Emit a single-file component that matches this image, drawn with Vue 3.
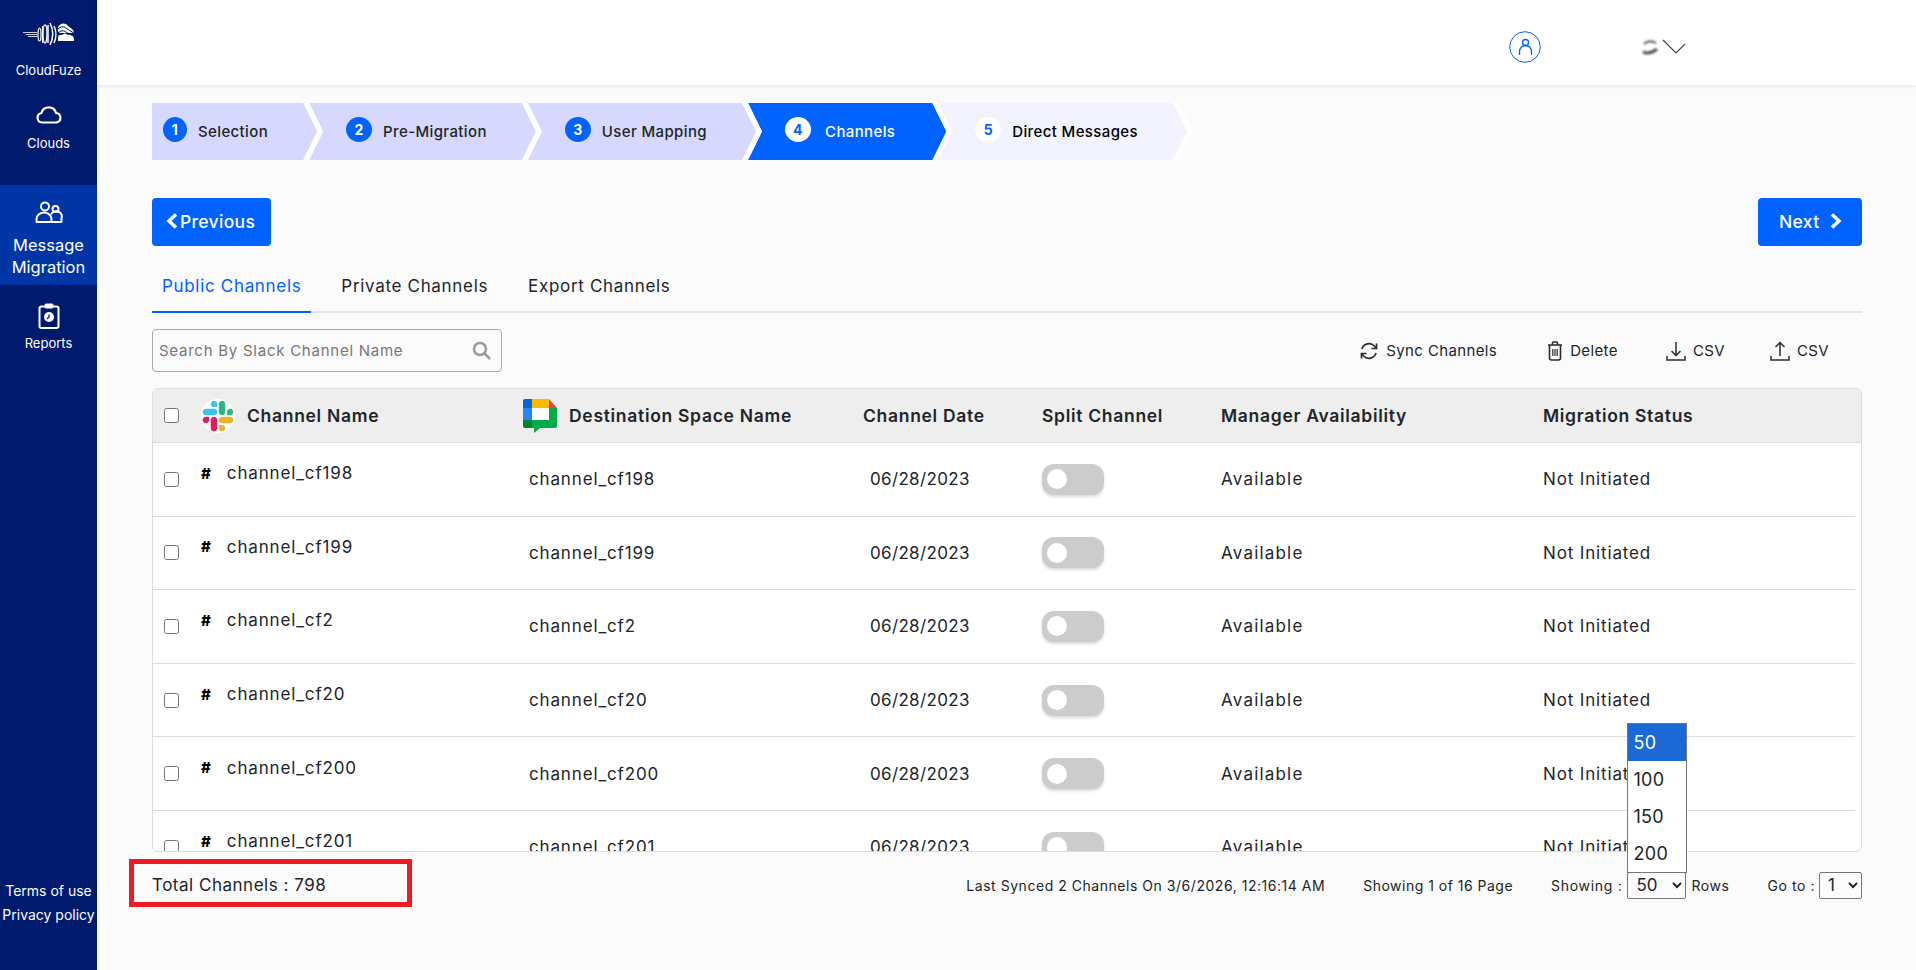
<template>
  <div class="page">
    <!-- Sidebar -->
    <aside class="sidebar">
      <div class="logo">
        <svg width="52" height="24" viewBox="0 0 52 24" fill="none" stroke="#fff">
          <path d="M0 10.500h14M3 12.500h11M5 14.500h9" stroke-width="0.8" />
          <ellipse cx="16.500" cy="12.500" rx="1.500" ry="6.500" stroke-width="1.200" />
          <ellipse cx="22" cy="12" rx="2" ry="9" stroke-width="1.300" />
          <path d="M19.500 4v17" stroke-width="1.200" />
          <path d="M27 1c3.500 7 3.500 15 0 22M25 3v18M31 4c2.500 5 2.500 12 0 17" stroke-width="1.500" />
          <path d="M35 5q3-5 8-3 3 3 6 5 2 2 2 4H35z" fill="#fff" stroke="none" />
          <path d="M35 16q0-4 4-3 3-3 6 0 6-1 6 5v1H35z" fill="#fff" stroke="none" />
          <path d="M35 7q4-4 8-1t8 5M35 11q4-4 8-1t8 4" stroke="#001a6e" stroke-width="1" />
        </svg>
        <span>CloudFuze</span>
      </div>
      <div class="nav-item">
        <svg width="28" height="20" viewBox="0 0 28 20" fill="none" stroke="#fff" stroke-width="2.200">
          <path d="M7 18.500a4.800 4.800 0 0 1-.5-9.500 7.500 7.500 0 0 1 14.500 0 4.800 4.800 0 0 1 .5 9.500z" stroke-linejoin="round" />
        </svg>
        <span>Clouds</span>
      </div>
      <div class="nav-item active">
        <svg width="28" height="22" viewBox="0 0 28 22" fill="none" stroke="#fff" stroke-width="2">
          <circle cx="10" cy="5.500" r="4" />
          <circle cx="20.500" cy="8" r="3" />
          <path d="M1.500 21v-3a7 6 0 0 1 15 0v3z" stroke-linejoin="round" />
          <path d="M16 13.500a5.500 5 0 0 1 10.500 3.500v4h-10" stroke-linejoin="round" />
        </svg>
        <span class="nav-big">Message Migration</span>
      </div>
      <div class="nav-item nav-item--reports">
        <svg width="22" height="26" viewBox="0 0 22 26" fill="none" stroke="#fff" stroke-width="2">
          <rect x="1.500" y="3.500" width="19" height="21.500" rx="2" />
          <rect x="7" y="1" width="8" height="4" rx="1" fill="#fff" stroke-width="1" />
          <circle cx="11" cy="14" r="5" fill="#fff" stroke="none" />
          <path d="M11 11.500V14l-2 2" stroke="#001a6e" stroke-width="1.300" />
        </svg>
        <span>Reports</span>
      </div>
      <div class="side-links">
        <span>Terms of use</span>
        <span>Privacy policy</span>
      </div>
    </aside>

    <div class="main">
      <!-- Top bar -->
      <header class="topbar">
        <svg class="user-icon" width="32" height="32" viewBox="0 0 32 32" fill="none" stroke="#0062ff">
          <circle cx="16" cy="16" r="15.300" stroke-width="1" />
          <circle cx="16.500" cy="11.500" r="3" stroke-width="1.300" />
          <path d="M10.500 24v-3.500a6 6 0 0 1 12 0V24" stroke-width="1.300" />
        </svg>
        <svg class="user-blur" width="19" height="17" viewBox="0 0 19 17" fill="none" stroke="#555">
          <path d="M15 4Q8 0 3 5" stroke-width="2" />
          <path d="M2 13q7 3 14-3" stroke-width="3" />
        </svg>
        <svg class="user-chevron" width="24" height="16" viewBox="0 0 24 16" fill="none" stroke="#444" stroke-width="1.200">
          <path d="M1 1l13 13 9-9" />
        </svg>
      </header>

      <div class="content">
        <!-- Stepper -->
        <div class="stepper">
          <div
            v-for="(step, i) in steps"
            :key="step"
            class="step"
            :class="{ first: i === 0, current: i === 3, todo: i === 4 }"
          >
            <div class="step__body">
              <span class="step__num">{{ i + 1 }}</span>
              <span class="step__label">{{ step }}</span>
            </div>
          </div>
        </div>

        <div class="nav-buttons">
          <div class="btn">
            <svg width="12" height="16" viewBox="0 0 12 16" fill="none" stroke="#fff" stroke-width="3.400">
              <path d="M10 1.500L3 8l7 6.500" />
            </svg>
            <span>Previous</span>
          </div>
          <div class="btn btn--next">
            <span>Next</span>
            <svg width="12" height="16" viewBox="0 0 12 16" fill="none" stroke="#fff" stroke-width="3.400">
              <path d="M2 1.500L9 8l-7 6.500" />
            </svg>
          </div>
        </div>

        <!-- Tabs -->
        <div class="tabs">
          <div class="tab tab--active">Public Channels</div>
          <div class="tab">Private Channels</div>
          <div class="tab">Export Channels</div>
        </div>

        <!-- Toolbar -->
        <div class="toolbar">
          <div class="search">
            <input type="text" placeholder="Search By Slack Channel Name" />
            <svg width="19" height="19" viewBox="0 0 19 19" fill="none" stroke="#9b9b9b" stroke-width="2.500">
              <circle cx="8" cy="8" r="6" />
              <path d="M12.500 12.500L18 18" />
            </svg>
          </div>
          <div class="actions">
            <div class="action action--sync">
              <svg width="20" height="20" viewBox="0 0 24 24" fill="none" stroke="#2b2b2b" stroke-width="2">
                <path d="M21 3v6h-6M3 21v-6h6" />
                <path d="M3.500 9.500a9 9 0 0 1 15-3.500L21 9M3 15l2.500 3a9 9 0 0 0 15-3.500" />
              </svg>
              <span>Sync Channels</span>
            </div>
            <div class="action action--delete">
              <svg width="16" height="20" viewBox="0 0 16 20" fill="none" stroke="#2b2b2b" stroke-width="1.600">
                <path d="M1 4h14M5.500 4V2q0-1 1-1h3q1 0 1 1v2" />
                <path d="M2.500 4v13q0 2 2 2h7q2 0 2-2V4" />
                <path d="M5.800 8v7M8 8v7M10.200 8v7" stroke-width="1.200" />
              </svg>
              <span>Delete</span>
            </div>
            <div class="action action--csv">
              <svg width="20" height="20" viewBox="0 0 20 20" fill="none" stroke="#2b2b2b" stroke-width="1.500">
                <path d="M10 1v13M5.500 10l4.500 4.500 4.500-4.500" />
                <path d="M1 15v4h18v-4" />
              </svg>
              <span>CSV</span>
            </div>
            <div class="action">
              <svg width="20" height="20" viewBox="0 0 20 20" fill="none" stroke="#2b2b2b" stroke-width="1.500">
                <path d="M10 15V1.500M5.500 6L10 1.500 14.500 6" />
                <path d="M1 15v4h18v-4" />
              </svg>
              <span>CSV</span>
            </div>
          </div>
        </div>

        <!-- Table -->
        <div class="table">
          <div class="tr tr--head">
            <div class="cell-check"><input type="checkbox" /></div>
            <div class="th">
              <svg width="34" height="34" viewBox="-6 -6 136 136">
                <circle cx="62" cy="62" r="68" fill="#fff" />
                <path d="M26.400 78.200c0 7.100-5.800 12.900-12.900 12.900S.6 85.300.6 78.200c0-7.100 5.800-12.900 12.900-12.900h12.900v12.900zm6.500 0c0-7.100 5.800-12.900 12.900-12.900s12.900 5.800 12.900 12.900v32.300c0 7.100-5.800 12.900-12.900 12.900s-12.900-5.800-12.900-12.900V78.200z" fill="#E01E5A" />
                <path d="M45.800 26.400c-7.100 0-12.900-5.800-12.900-12.900S38.700.6 45.800.6s12.900 5.800 12.900 12.900v12.900H45.800zm0 6.500c7.100 0 12.900 5.800 12.900 12.900s-5.800 12.900-12.900 12.900H13.500C6.400 58.700.6 52.900.6 45.800s5.800-12.900 12.900-12.900h32.300z" fill="#36C5F0" />
                <path d="M97.600 45.800c0-7.100 5.800-12.900 12.900-12.900s12.900 5.800 12.900 12.900-5.800 12.900-12.900 12.900H97.600V45.800zm-6.500 0c0 7.100-5.800 12.900-12.900 12.900s-12.900-5.800-12.900-12.900V13.500C65.300 6.400 71.100.6 78.200.6s12.900 5.800 12.900 12.900v32.300z" fill="#2EB67D" />
                <path d="M78.200 97.600c7.100 0 12.900 5.800 12.900 12.900s-5.800 12.900-12.900 12.900-12.900-5.800-12.900-12.900V97.600h12.900zm0-6.500c-7.100 0-12.900-5.800-12.900-12.900s5.800-12.900 12.900-12.900h32.300c7.100 0 12.900 5.800 12.900 12.900s-5.800 12.900-12.900 12.900H78.200z" fill="#ECB22E" />
              </svg>
              <span>Channel Name</span>
            </div>
            <div class="th">
              <svg width="34" height="34" viewBox="0 0 34 34">
                <rect x="9" y="9" width="17" height="12" fill="#fff" />
                <path d="M2 0h7v9H0V2q0-2 2-2z" fill="#0066da" />
                <rect x="9" y="0" width="17" height="9" fill="#ffba00" />
                <path d="M26 0l8 9h-8z" fill="#ea4335" />
                <rect y="9" width="9" height="12" fill="#2684fc" />
                <path d="M0 21h9v8H2q-2 0-2-2z" fill="#00832d" />
                <path d="M26 9h8v18q0 2-2 2H17l-6 5v-5H9v-8h17z" fill="#00ac47" />
              </svg>
              <span>Destination Space Name</span>
            </div>
            <div class="th">Channel Date</div>
            <div class="th">Split Channel</div>
            <div class="th">Manager Availability</div>
            <div class="th">Migration Status</div>
          </div>

          <div v-for="name in channels" :key="name" class="tr">
            <div class="cell-check"><input type="checkbox" /></div>
            <div class="td td--name">
              <span class="hash">#</span>
              <span>{{ name }}</span>
            </div>
            <div class="td td--dest">{{ name }}</div>
            <div class="td td--date">06/28/2023</div>
            <div class="td">
              <div class="toggle"><span class="toggle__knob"></span></div>
            </div>
            <div class="td td--avail">Available</div>
            <div class="td">Not Initiated</div>
          </div>
        </div>

        <!-- Footer -->
        <div class="footer">
          <div class="total">
            <span>Total Channels : 798</span>
            <div class="total__mark"></div>
          </div>
          <div class="footer__right">
            <span class="synced">Last Synced 2 Channels On 3/6/2026, 12:16:14 AM</span>
            <span class="pages">Showing 1 of 16 Page</span>
            <span class="showing">Showing :</span>
            <div class="rows-select">
              <select class="select select--rows">
                <option v-for="n in rowOptions" :key="n">{{ n }}</option>
              </select>
              <div class="rows-menu">
                <div
                  v-for="(n, i) in rowOptions"
                  :key="n"
                  class="rows-menu__item"
                  :class="{ selected: i === 0 }"
                >
                  {{ n }}
                </div>
              </div>
            </div>
            <span class="rows-label">Rows</span>
            <span class="goto">Go to :</span>
            <select class="select select--goto">
              <option>1</option>
            </select>
          </div>
        </div>
      </div>
    </div>
  </div>
</template>

<script setup>
const steps = ['Selection', 'Pre-Migration', 'User Mapping', 'Channels', 'Direct Messages'];

const channels = [
  'channel_cf198',
  'channel_cf199',
  'channel_cf2',
  'channel_cf20',
  'channel_cf200',
  'channel_cf201',
];

const rowOptions = [50, 100, 150, 200];
</script>

<style>
html,
body {
  margin: 0;
  background: #fbfbfc;
}
</style>

<style scoped>
.page {
  display: flex;
  height: 970px;
  overflow: hidden;
  font-family: Inter, 'Liberation Sans', sans-serif;
  letter-spacing: 0.02em;
  color: #212529;
  background: #fbfbfc;
}

/* Sidebar */
.sidebar {
  display: flex;
  flex-direction: column;
  flex: none;
  width: 97px;
  background: #001a6e;
  color: #fff;
  font-size: 13px;
  letter-spacing: 0;
  text-align: center;
}

.logo {
  display: flex;
  flex-direction: column;
  align-items: center;
  gap: 16px;
  height: 85px;
  padding-top: 22px;
  box-sizing: border-box;
}

.nav-item {
  display: flex;
  flex-direction: column;
  align-items: center;
  gap: 11px;
  height: 100px;
  padding-top: 19px;
  box-sizing: border-box;
}

.nav-item.active {
  gap: 11px;
  padding-top: 16px;
  background: #0035a5;
}

.nav-item--reports {
  gap: 6px;
  padding-top: 18px;
}

.nav-big {
  font-size: 16.5px;
  line-height: 22px;
}

.side-links {
  display: flex;
  flex-direction: column;
  gap: 7px;
  margin-top: auto;
  padding-bottom: 47px;
  font-size: 14px;
  white-space: nowrap;
}

.side-links span {
  line-height: 17px;
}

/* Top bar */
.main {
  flex: 1;
  min-width: 0;
}

.topbar {
  display: flex;
  align-items: center;
  height: 85px;
  padding: 6px 0 0 1412px;
  box-sizing: border-box;
  background: #fff;
  box-shadow: 0 1px 4px #0000001a;
}

.user-icon {
  margin-top: 3px;
}

.user-blur {
  margin: 3px 2px 0 100px;
  filter: blur(1px);
}

.user-chevron {
  margin-top: 2px;
}

.content {
  padding: 18px 54px 0 55px;
}

/* Stepper */
.stepper {
  display: flex;
  height: 57px;
}

.step {
  margin-left: -14px;
  padding-right: 6px;
  background: #fff;
  clip-path: polygon(0 0, calc(100% - 14px) 0, 100% 50%, calc(100% - 14px) 100%, 0 100%, 14px 50%);
}

.step__body {
  display: flex;
  align-items: center;
  height: 100%;
  padding: 0 49px 0 37px;
  background: #d6d9fd;
  clip-path: polygon(0 0, calc(100% - 14px) 0, 100% 50%, calc(100% - 14px) 100%, 0 100%, 14px 50%);
}

.step.first {
  margin-left: 0;
  clip-path: polygon(0 0, calc(100% - 14px) 0, 100% 50%, calc(100% - 14px) 100%, 0 100%);
}

.step.first .step__body {
  padding-left: 11px;
  clip-path: polygon(0 0, calc(100% - 14px) 0, 100% 50%, calc(100% - 14px) 100%, 0 100%);
}

.step.first .step__num {
  width: 24px;
}

.step__num {
  display: flex;
  align-items: center;
  justify-content: center;
  width: 26px;
  height: 25px;
  margin: -5px 11px 0 0;
  border-radius: 50%;
  background: #0062ff;
  color: #fff;
  font-size: 14px;
  font-weight: 700;
}

.step__label {
  font-size: 15px;
  font-weight: 500;
  letter-spacing: 0.025em;
  white-space: nowrap;
}

.step.current .step__body {
  padding-right: 51px;
  background: #0062ff;
  color: #fff;
}

.step.current .step__num {
  margin-right: 14px;
}

.step.current .step__num,
.step.todo .step__num {
  background: #fff;
  color: #0062ff;
}

.step.todo .step__body {
  background: #f2f3ff;
  color: #000;
}

/* Buttons */
.nav-buttons {
  display: flex;
  justify-content: space-between;
  margin-top: 38px;
}

.btn {
  display: flex;
  align-items: center;
  gap: 2px;
  width: 119px;
  height: 48px;
  padding-left: 14px;
  padding-bottom: 2px;
  box-sizing: border-box;
  border-radius: 4px;
  background: #0062ff;
  color: #fff;
  font-size: 17.5px;
  font-weight: 500;
}

.btn--next {
  gap: 11px;
  width: 104px;
  padding-left: 21px;
}

/* Tabs */
.tabs {
  display: flex;
  margin-top: 24px;
  border-bottom: 2px solid #e6e6ea;
}

.tab {
  height: 37px;
  margin: 0 20px -2px 0;
  padding: 4px 10px 0;
  font-size: 17px;
  letter-spacing: 0.04em;
  line-height: 24px;
  border-bottom: 2px solid transparent;
}

.tab--active {
  color: #0062ff;
  border-bottom-color: #0062ff;
}

/* Toolbar */
.toolbar {
  display: flex;
  align-items: center;
  justify-content: space-between;
  height: 43px;
  margin-top: 16px;
}

.search {
  display: flex;
  align-items: center;
  width: 350px;
  height: 43px;
  padding: 0 10px 0 6px;
  box-sizing: border-box;
  border: 1px solid #aaa;
  border-radius: 4px;
}

.search input {
  flex: 1;
  min-width: 0;
  padding: 0;
  border: 0;
  outline: 0;
  background: none;
  font: inherit;
  font-size: 15px;
  letter-spacing: 0.05em;
}

.search input::placeholder {
  color: #777;
}

.actions {
  display: flex;
  align-items: center;
  padding-right: 33px;
}

.action {
  display: flex;
  align-items: center;
  gap: 7px;
  font-size: 15px;
  letter-spacing: 0.025em;
}

.action--sync {
  margin-right: 50px;
}

.action--delete {
  margin-right: 48px;
}

.action--csv {
  margin-right: 45px;
}

/* Table */
.table {
  position: relative;
  width: 1710px;
  height: 464px;
  margin-top: 16px;
  overflow: hidden;
  box-sizing: border-box;
  border: 1px solid #ddd;
  border-radius: 6px;
  background: #fff;
}

.tr {
  display: grid;
  grid-template-columns: 48px 322px 340px 179px 179px 322px 1fr;
  align-items: center;
  height: 73.6px;
  margin-right: 6px;
  box-sizing: border-box;
  border-bottom: 1px solid #ddd;
  font-size: 17px;
  letter-spacing: 0.05em;
}

.tr--head {
  height: 54px;
  margin-right: 0;
  background: #eee;
}

.th {
  display: flex;
  align-items: center;
  gap: 12px;
  font-size: 17.5px;
  font-weight: 600;
  letter-spacing: 0.04em;
  white-space: nowrap;
}

.cell-check {
  padding-left: 11px;
  display: flex;
}

.cell-check input {
  width: 15px;
  height: 15px;
  margin: 0;
}

.td--name {
  display: flex;
  align-items: center;
  gap: 16px;
  padding-bottom: 12px;
}

.hash {
  font-size: 15px;
  font-weight: 800;
  letter-spacing: 0;
  color: #000;
}

.td--dest {
  padding-left: 6px;
}

.td--date {
  padding-left: 7px;
  letter-spacing: 0.02em;
}

.td--avail {
  letter-spacing: 0.07em;
}

.toggle {
  display: flex;
  align-items: center;
  width: 62px;
  height: 31px;
  padding-left: 5px;
  box-sizing: border-box;
  border-radius: 12px;
  background: #ccc;
  box-shadow: 0 2px 3px #00000026;
}

.toggle__knob {
  width: 20px;
  height: 20px;
  border-radius: 50%;
  background: #fff;
}

/* Footer */
.footer {
  display: flex;
  align-items: center;
  justify-content: space-between;
  height: 66px;
}

.total {
  position: relative;
  font-size: 17px;
  letter-spacing: 0.03em;
}

/* red marker drawn over the screenshot */
.total__mark {
  position: absolute;
  left: -23px;
  top: -16px;
  width: 283px;
  height: 48px;
  box-sizing: border-box;
  border: 5px solid #ed1c24;
}

.footer__right {
  display: flex;
  align-items: center;
  font-size: 14px;
  white-space: nowrap;
}

.synced {
  letter-spacing: 0.038em;
}

.pages {
  margin-left: 38px;
  letter-spacing: 0.035em;
}

.showing {
  margin-left: 38px;
  margin-right: 5px;
  letter-spacing: 0.05em;
}

.rows-select {
  position: relative;
  display: flex;
}

.select {
  height: 27px;
  padding: 0 0 0 4px;
  box-sizing: border-box;
  border: 1px solid #777;
  border-radius: 2px;
  outline: 0;
  background-color: transparent;
  color: #212529;
  font: inherit;
  font-size: 17px;
}

.select--rows {
  width: 59px;
}

.select--goto {
  width: 43px;
}

.rows-menu {
  position: absolute;
  left: 0;
  bottom: 26px;
  width: 60px;
  box-sizing: border-box;
  border: 1px solid #777;
  background: #fff;
  font-size: 18px;
}

.rows-menu__item {
  height: 37px;
  padding-left: 5px;
  line-height: 37px;
}

.rows-menu__item.selected {
  background: #1a69d6;
  color: #fff;
}

.rows-label {
  margin-left: 5px;
  letter-spacing: 0.04em;
}

.goto {
  margin-left: 38px;
  margin-right: 4px;
  letter-spacing: 0.04em;
}
</style>
